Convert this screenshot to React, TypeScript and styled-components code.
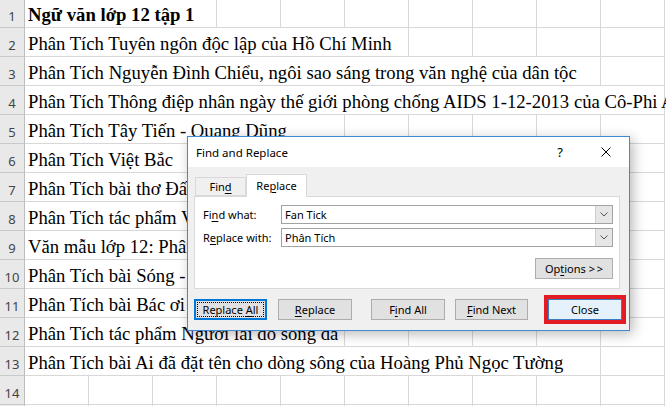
import React from 'react'
import styled, { createGlobalStyle } from 'styled-components'

const GlobalStyle = createGlobalStyle`
  html, body {
    margin: 0;
    padding: 0;
    background: #ffffff;
    overflow: hidden;
  }
  body {
    width: 666px;
    height: 406px;
  }
`

type RowData = { text: string; span: number; bold?: boolean; label?: string }

const rows: RowData[] = [
  { text: 'Ngữ văn lớp 12 tập 1', span: 3, bold: true },
  { text: 'Phân Tích Tuyên ngôn độc lập của Hồ Chí Minh', span: 6 },
  { text: 'Phân Tích Nguyễn Đình Chiểu, ngôi sao sáng trong văn nghệ của dân tộc', span: 9 },
  { text: 'Phân Tích Thông điệp nhân ngày thế giới phòng chống AIDS 1-12-2013 của Cô-Phi An-Nan', span: 10 },
  { text: 'Phân Tích Tây Tiến - Quang Dũng', span: 5 },
  { text: 'Phân Tích Việt Bắc', span: 3 },
  { text: 'Phân Tích bài thơ Đất Nước', span: 5 },
  { text: 'Phân Tích tác phẩm Vợ chồng A Phủ', span: 6 },
  { text: 'Văn mẫu lớp 12: Phân Tích Rừng xà nu', span: 6 },
  { text: 'Phân Tích bài Sóng - Xuân Quỳnh', span: 5 },
  { text: 'Phân Tích bài Bác ơi của Tố Hữu', span: 5 },
  { text: 'Phân Tích tác phẩm Người lái đò sông đà', span: 5 },
  { text: 'Phân Tích bài Ai đã đặt tên cho dòng sông của Hoàng Phủ Ngọc Tường', span: 9 },
  { text: '', span: 1 },
  { text: '', span: 1, label: '' },
]

const COLS = 10

const Chevron = () => (
  <svg width="8" height="5" viewBox="0 0 8 5">
    <path d="M0.5 0.5 L4 4 L7.5 0.5" stroke="#555" strokeWidth="1" fill="none" />
  </svg>
)

const App = () => {
  return (
    <>
      <GlobalStyle />
      <Sheet>
        {rows.map((row, i) => (
          <Row key={i} $first={i === 0}>
            <RowHeader>{row.label ?? i + 1}</RowHeader>
            <Cell $span={row.span} $bold={row.bold}>{row.text}</Cell>
            {Array.from({ length: COLS - row.span }).map((_, c) => (
              <Cell key={c} $span={1} />
            ))}
          </Row>
        ))}

        <Dialog>
          <TitleBar>
            <Title>Find and Replace</Title>
            <TitleControls>
              <ControlButton>?</ControlButton>
              <ControlButton>
                <svg width="10" height="10" viewBox="0 0 10 10">
                  <path d="M0.5 0.5 L9.5 9.5 M9.5 0.5 L0.5 9.5" stroke="#000" strokeWidth="1" fill="none" />
                </svg>
              </ControlButton>
            </TitleControls>
          </TitleBar>

          <Body>
            <Tabs>
              <Tab><span>Fin<Key>d</Key></span></Tab>
              <Tab $active><span>Re<Key>p</Key>lace</span></Tab>
            </Tabs>

            <Panel>
              <Field>
                <Label>Fi<Key>n</Key>d what:</Label>
                <Combo>
                  <ComboText>Fan Tick</ComboText>
                  <ComboArrow><Chevron /></ComboArrow>
                </Combo>
              </Field>
              <Field>
                <Label>R<Key>e</Key>place with:</Label>
                <Combo>
                  <ComboText>Phân Tích</ComboText>
                  <ComboArrow><Chevron /></ComboArrow>
                </Combo>
              </Field>
              <OptionsRow>
                <Button $width={78}><span>Op<Key>t</Key>ions &gt;&#8201;&gt;</span></Button>
              </OptionsRow>
            </Panel>

            <ButtonRow>
              <Button $width={73} $focused><span>Replace <Key>A</Key>ll</span></Button>
              <Button $width={74} $gap={11}><span><Key>R</Key>eplace</span></Button>
              <Button $width={74} $gap={19}><span>F<Key>i</Key>nd All</span></Button>
              <Button $width={73} $gap={10}><span><Key>F</Key>ind Next</span></Button>
              <RedFrame>
                <Button $width={74} $primary><span>Close</span></Button>
              </RedFrame>
            </ButtonRow>
          </Body>
        </Dialog>
      </Sheet>
    </>
  )
}

export default App

const Sheet = styled.div`
position: relative;
width: 666px;
height: 406px;
overflow: hidden;
display: flex;
flex-direction: column;
`

const Row = styled.div<{ $first?: boolean }>`
display: grid;
grid-template-columns: 25px repeat(10, 64px);
height: ${p => (p.$first ? 28 : 29)}px;
flex-shrink: 0;
`

const RowHeader = styled.div`
box-sizing: border-box;
background: #e9e9e9;
border-right: 1px solid #bdbdbd;
border-bottom: 1px solid #c9c9c9;
display: flex;
align-items: flex-end;
justify-content: center;
padding-bottom: 2px;
font-family: "Noto Sans", "Open Sans", sans-serif;
font-size: 13px;
color: #444;
`

const Cell = styled.div<{ $span: number; $bold?: boolean }>`
grid-column: span ${p => p.$span};
box-sizing: border-box;
border-right: 1px solid #d8d8d8;
border-bottom: 1px solid #d8d8d8;
display: flex;
align-items: flex-end;
padding: 0 0 1px 3px;
white-space: nowrap;
overflow: visible;
font-family: "Liberation Serif", "Times New Roman", serif;
font-size: 18.7px;
font-weight: ${p => (p.$bold ? 700 : 400)};
color: #000;
`

const Dialog = styled.div`
position: absolute;
left: 187px;
top: 136px;
width: 443px;
height: 195px;
box-sizing: border-box;
border: 1px solid #3f8ad2;
background: #f0f0f0;
box-shadow: 3px 3px 12px rgba(0, 0, 0, 0.28);
display: flex;
flex-direction: column;
font-family: "Noto Sans", "Open Sans", sans-serif;
font-size: 11px;
color: #000;
`

const TitleBar = styled.div`
height: 30px;
background: #fff;
display: flex;
align-items: center;
padding-left: 8px;
flex-shrink: 0;
`

const Title = styled.div`
font-size: 11.5px;
`

const TitleControls = styled.div`
margin-left: auto;
display: flex;
height: 100%;
`

const ControlButton = styled.div`
width: 46px;
height: 100%;
display: flex;
align-items: center;
justify-content: center;
font-size: 13px;
`

const Body = styled.div`
padding: 7px 9px 0 6px;
display: flex;
flex-direction: column;
`

const Tabs = styled.div`
display: flex;
align-items: flex-end;
padding-left: 1px;
position: relative;
z-index: 1;
`

const Tab = styled.div<{ $active?: boolean }>`
box-sizing: border-box;
height: ${p => (p.$active ? 23 : 19)}px;
width: ${p => (p.$active ? 61 : 51)}px;
margin-bottom: ${p => (p.$active ? -1 : 0)}px;
background: ${p => (p.$active ? '#fff' : '#f0f0f0')};
border: 1px solid #d9d9d9;
border-bottom: ${p => (p.$active ? 'none' : '1px solid #d9d9d9')};
display: flex;
align-items: center;
justify-content: center;
padding-bottom: ${p => (p.$active ? 1 : 0)}px;
`

const Key = styled.span`
text-decoration: underline;
text-underline-offset: 2px;
`

const Panel = styled.div`
box-sizing: border-box;
width: 426px;
height: 93px;
background: #fff;
border: 1px solid #d9d9d9;
padding: 8px 6px 0 8px;
display: flex;
flex-direction: column;
gap: 4px;
`

const Field = styled.div`
display: grid;
grid-template-columns: 78px 1fr;
align-items: center;
height: 19px;
`

const Label = styled.div`
white-space: nowrap;
`

const Combo = styled.div`
box-sizing: border-box;
height: 19px;
border: 1px solid #a2a2a2;
display: flex;
align-items: center;
background: #fff;
`

const ComboText = styled.div`
flex: 1;
padding-left: 3px;
`

const ComboArrow = styled.div`
box-sizing: border-box;
width: 17px;
height: 17px;
background: #e6e6e6;
border-left: 1px solid #cfcfcf;
display: flex;
align-items: center;
justify-content: center;
`

const OptionsRow = styled.div`
display: flex;
justify-content: flex-end;
margin-top: 7px;
`

const Button = styled.div<{ $width: number; $gap?: number; $focused?: boolean; $primary?: boolean }>`
box-sizing: border-box;
flex-shrink: 0;
width: ${p => p.$width}px;
height: 21px;
margin-left: ${p => p.$gap ?? 0}px;
background: ${p => (p.$primary ? '#e5f1fb' : '#e1e1e1')};
border: ${p => (p.$focused ? '2px solid #0078d7' : p.$primary ? '1px solid #3b7ec4' : '1px solid #adadad')};
outline: ${p => (p.$focused ? '1px dotted #000' : 'none')};
outline-offset: -4px;
display: flex;
align-items: center;
justify-content: center;
white-space: nowrap;
`

const ButtonRow = styled.div`
display: flex;
align-items: center;
margin-top: 6px;
`

const RedFrame = styled.div`
flex-shrink: 0;
margin-left: 16px;
border: 4px solid #e31b23;
display: flex;
`
